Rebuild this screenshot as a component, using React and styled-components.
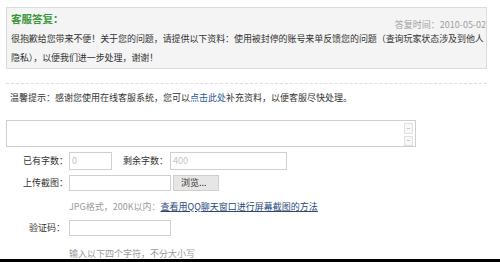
import React from "react";
import styled, { createGlobalStyle } from "styled-components";

const Global = createGlobalStyle`
  html, body {
    margin: 0;
    padding: 0;
    background: #fff;
  }
  body {
    font-family: "Noto Sans CJK SC", "Liberation Sans", sans-serif;
    color: #333;
  }
`;

const Page = styled.div`
  width: 500px;
  height: 262px;
  box-sizing: border-box;
  padding: 7px 13px 0 6px;
  position: relative;
  overflow: hidden;
`;

const ReplyBox = styled.div`
  border: 1px solid #dcdcdc;
  background: #f4f4f4;
  height: 62px;
  box-sizing: border-box;
  padding: 1px 0 0 4px;
`;

const ReplyHead = styled.div`
  display: flex;
  justify-content: space-between;
  align-items: flex-end;
  height: 17px;
`;

const Title = styled.div`
  font-size: 10.5px;
  font-weight: bold;
  color: #3a963a;
  line-height: 14px;
`;

const Date = styled.div`
  font-size: 9px;
  color: #a0a0a0;
  line-height: 12px;
  margin-bottom: -5px;
`;

const ReplyText = styled.div`
  font-size: 9px;
  line-height: 19px;
  color: #333;
  margin-top: 3px;
  letter-spacing: -0.08px;
`;

const Dashed = styled.div`
  border-top: 1px dashed #dedede;
  margin-top: 14px;
`;

const Tip = styled.div`
  font-size: 9px;
  line-height: 14px;
  margin: 7px 0 0 4px;
  color: #333;
`;

const Blue = styled.span`
  color: #2a5a9a;
`;

const TextArea = styled.div`
  margin-top: 15px;
  width: 410px;
  height: 27px;
  border: 1px solid #cfcfcf;
  box-sizing: border-box;
  display: flex;
  justify-content: flex-end;
  padding: 2px 2px 0 0;
`;

const ScrollCol = styled.div`
  display: flex;
  flex-direction: column;
  gap: 2px;
`;

const ScrollBtn = styled.div`
  width: 7px;
  height: 9px;
  border: 1px solid #e2e2e2;
  background: #f7f7f7;
  display: flex;
  align-items: center;
  justify-content: center;
  &::after {
    content: "";
    width: 3px;
    height: 1px;
    background: #c8c8c8;
  }
`;

const Form = styled.div`
  display: grid;
  grid-template-columns: 62px 1fr;
  column-gap: 1px;
  margin-top: 2px;
`;

const Label = styled.div`
  font-size: 9px;
  color: #333;
  text-align: right;
  align-self: center;
  padding-right: ${p => p.$pad || 0}px;
`;

const Field = styled.div`
  display: flex;
  align-items: center;
  height: ${p => p.$h}px;
  gap: 2px;
`;

const Input = styled.div`
  width: ${p => p.$w}px;
  height: ${p => p.$h || 16}px;
  border: 1px solid #d0d0d0;
  box-sizing: border-box;
  background: #fff;
  font-size: 9px;
  color: #c4c4c4;
  display: flex;
  align-items: center;
  padding-left: 2px;
`;

const InlineLabel = styled.span`
  font-size: 9px;
  color: #333;
  margin: 0 0 0 9px;
`;

const Browse = styled.div`
  width: 46px;
  height: 16px;
  box-sizing: border-box;
  border: 1px solid #cfcfcf;
  background: #e6e6e6;
  font-size: 9px;
  color: #333;
  display: flex;
  align-items: center;
  padding-left: 7px;
`;

const Note = styled.div`
  font-size: 9px;
  color: #9a9a9a;
`;

const Link = styled.span`
  color: #2c4a7a;
  text-decoration: underline;
`;

const Bottom = styled.div`
  position: absolute;
  left: 0;
  right: 0;
  bottom: 0;
  height: 3px;
  background: #000;
`;

export default function App() {
  return (
    <>
      <Global />
      <Page>
        <ReplyBox>
          <ReplyHead>
            <Title>客服答复：</Title>
            <Date>答复时间：2010-05-02</Date>
          </ReplyHead>
          <ReplyText>
            很抱歉给您带来不便！关于您的问题，请提供以下资料：使用被封停的账号来单反馈您的问题（查询玩家状态涉及到他人隐私），以便我们进一步处理，谢谢！
          </ReplyText>
        </ReplyBox>
        <Dashed />
        <Tip>
          温馨提示：感谢您使用在线客服系统，您可以<Blue>点击此处</Blue>补充资料，以便客服尽快处理。
        </Tip>
        <TextArea>
          <ScrollCol>
            <ScrollBtn />
            <ScrollBtn />
          </ScrollCol>
        </TextArea>
        <Form>
          <Label>已有字数：</Label>
          <Field $h={23}>
            <Input $w={43} $h={18}>0</Input>
            <InlineLabel>剩余字数：</InlineLabel>
            <Input $w={117} $h={18}>400</Input>
          </Field>
          <Label>上传截图：</Label>
          <Field $h={21}>
            <Input $w={102} />
            <Browse>浏览...</Browse>
          </Field>
          <div />
          <Field $h={26}>
            <Note>
              JPG格式，200K以内：<Link>查看用QQ聊天窗口进行屏幕截图的方法</Link>
            </Note>
          </Field>
          <Label $pad={3}>验证码：</Label>
          <Field $h={17}>
            <Input $w={102} />
          </Field>
          <div />
          <Field $h={34}>
            <Note>输入以下四个字符，不分大小写</Note>
          </Field>
        </Form>
        <Bottom />
      </Page>
    </>
  );
}
